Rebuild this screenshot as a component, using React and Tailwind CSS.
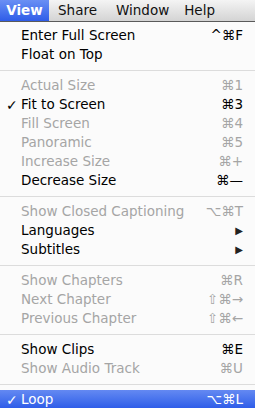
import React from 'react'

const groups = [
  [
    { label: 'Enter Full Screen', key: '^⌘F' },
    { label: 'Float on Top' },
  ],
  [
    { label: 'Actual Size', key: '⌘1', off: true },
    { label: 'Fit to Screen', key: '⌘3', check: true },
    { label: 'Fill Screen', key: '⌘4', off: true },
    { label: 'Panoramic', key: '⌘5', off: true },
    { label: 'Increase Size', key: '⌘+', off: true },
    { label: 'Decrease Size', key: '⌘—' },
  ],
  [
    { label: 'Show Closed Captioning', key: '⌥⌘T', off: true },
    { label: 'Languages', sub: true },
    { label: 'Subtitles', sub: true },
  ],
  [
    { label: 'Show Chapters', key: '⌘R', off: true },
    { label: 'Next Chapter', key: '⇧⌘→', off: true },
    { label: 'Previous Chapter', key: '⇧⌘←', off: true },
  ],
  [
    { label: 'Show Clips', key: '⌘E' },
    { label: 'Show Audio Track', key: '⌘U', off: true },
  ],
  [
    { label: 'Loop', key: '⌥⌘L', check: true, active: true },
  ],
]

function Item({ item }) {
  const color = item.active
    ? 'text-white bg-gradient-to-b from-[#6489f2] to-[#2c5ae8]'
    : item.off
    ? 'text-[#a5a5a5]'
    : 'text-black'
  return (
    <div className={`h-[19px] flex items-center pl-[6px] pr-[12px] ${color}`}>
      <span className="w-[15px] text-[14px] font-bold leading-none">{item.check ? '✓' : ''}</span>
      <span className="flex-1 text-[13.5px] leading-none">{item.label}</span>
      {item.key && <span className="text-[13.5px] leading-none">{item.key}</span>}
      {item.sub && <span className="text-[10px] leading-none text-[#222]">▶</span>}
    </div>
  )
}

export default function App() {
  return (
    <div
      className="w-[255px] h-[408px] overflow-hidden bg-[#fbfbfb] flex flex-col"
      style={{ fontFamily: '"DejaVu Sans", "Lucida Grande", sans-serif' }}
    >
      <div className="h-[22px] shrink-0 flex items-stretch bg-gradient-to-b from-[#f4f4f4] to-[#d4d4d4] border-b border-[#5a5a5a] text-[13.5px] text-[#111]">
        <div className="w-[49px] flex items-center justify-center font-semibold text-white bg-gradient-to-b from-[#6a8ff4] to-[#2f5ce8]">View</div>
        <div className="ml-[9px] flex items-center">Share</div>
        <div className="ml-[19px] flex items-center">Window</div>
        <div className="ml-[15px] flex items-center">Help</div>
      </div>
      <div className="pt-[4px] flex flex-col">
        {groups.map((g, i) => (
          <div key={i}>
            {i > 0 && (
              <div className="h-[12px] flex items-center">
                <div className="w-full h-px bg-[#dcdcdc]" />
              </div>
            )}
            {g.map((item) => (
              <Item key={item.label} item={item} />
            ))}
          </div>
        ))}
      </div>
    </div>
  )
}
